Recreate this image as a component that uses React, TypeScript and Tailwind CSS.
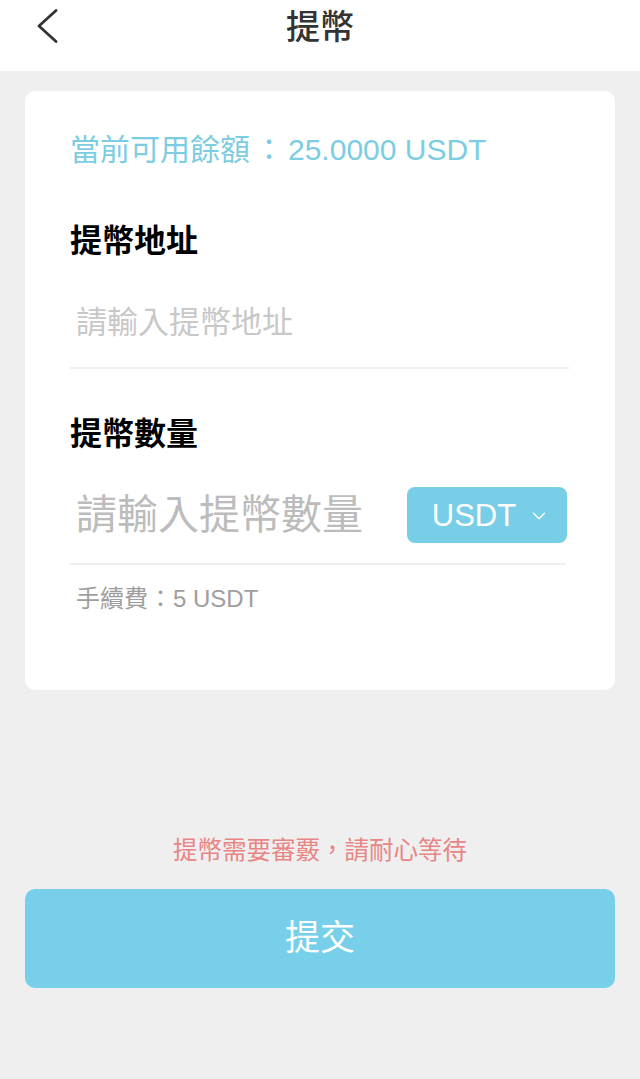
import { ChevronDown } from 'lucide-react';

const font = { fontFamily: '"Liberation Sans", "Noto Sans CJK TC", sans-serif' };

export default function App() {
  return (
    <div lang="zh-Hant" className="min-h-[1079px] bg-[#efefef] flex flex-col" style={font}>
      <header className="relative h-[71px] bg-white flex items-start justify-center">
        <button className="absolute left-[36px] top-[9px] text-[#333]" aria-label="返回">
          <svg width="22" height="34" viewBox="0 0 22 34" fill="none" aria-hidden="true">
            <polyline points="20,1.5 3,17 20,32.5" stroke="currentColor" strokeWidth="2.8" strokeLinecap="round" strokeLinejoin="round" />
          </svg>
        </button>
        <h1 className="mt-[7px] text-[34px] leading-[40px] font-medium text-[#333]">提幣</h1>
      </header>

      <main className="px-[25px] pt-[20px]">
        <section className="bg-white rounded-[10px] h-[599px] relative">
          <p className="absolute left-[45px] top-[39px] text-[30px] leading-[40px] text-[#7ccde2] whitespace-nowrap">
            當前可用餘額<span className="inline-block w-[38px] text-center">：</span>25.0000 USDT
          </p>
          <div className="absolute left-[45px] right-[46px] top-[130px]">
            <h2 className="text-[32px] leading-[40px] font-bold text-black">提幣地址</h2>
            <input
              className="mt-[42px] w-full text-[31px] leading-[40px] pl-[6px] outline-none placeholder:text-[#c8c8c8] bg-transparent"
              placeholder="請輸入提幣地址"
            />
            <div className="mt-[24px] h-[2px] bg-[#efefef]" />

            <h2 className="mt-[45px] text-[32px] leading-[40px] font-bold text-black">提幣數量</h2>
            <div className="mt-[33px] flex items-center justify-between pr-[2px]">
              <input
                className="w-[310px] text-[41px] leading-[56px] pl-[6px] outline-none placeholder:text-[#bcbcbc] bg-transparent"
                placeholder="請輸入提幣數量"
              />
              <button className="w-[160px] h-[56px] rounded-[8px] bg-[#77cee6] flex items-center justify-center gap-[12px] pl-[8px] text-white">
                <span className="text-[31px] leading-none">USDT</span>
                <ChevronDown className="w-[22px] h-[22px] mt-[2px]" strokeWidth={1.4} />
              </button>
            </div>
            <div className="mt-[20px] h-[2px] bg-[#efefef] mr-[3px]" />
            <p className="mt-[19px] pl-[6px] text-[24px] leading-[30px] text-[#9e9e9e] whitespace-nowrap">
              手續費<span className="inline-block w-[25px] text-center">：</span>5 USDT
            </p>
          </div>
        </section>
      </main>

      <p className="mt-[146px] text-center text-[24.5px] leading-[30px] text-[#e88585]">提幣需要審覈，請耐心等待</p>
      <div className="px-[25px] mt-[23px]">
        <button className="w-full h-[99px] rounded-[10px] bg-[#78cfe9] text-white text-[35px]">提交</button>
      </div>
    </div>
  );
}
